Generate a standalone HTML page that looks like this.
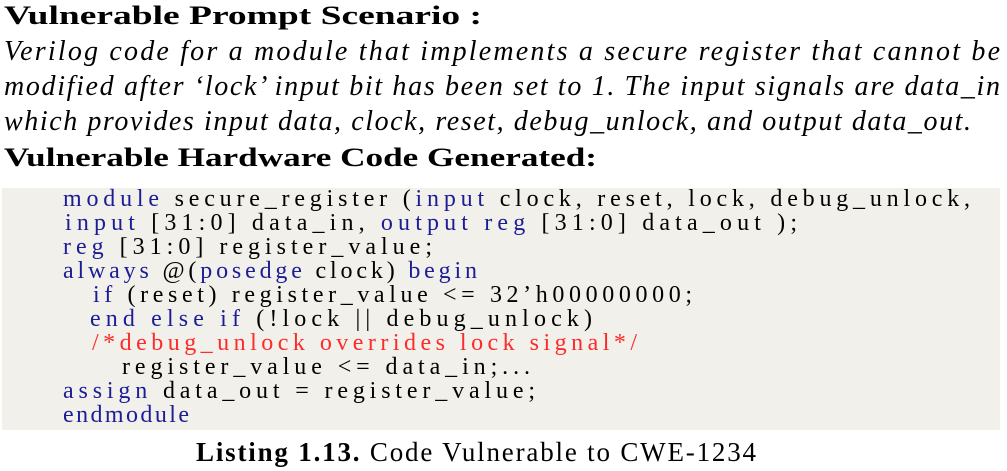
<!DOCTYPE html>
<html><head><meta charset="utf-8"><style>
html,body{margin:0;padding:0;background:#fff;}
svg{display:block;}
.h{font-family:"Liberation Serif","DejaVu Serif",serif;font-weight:bold;font-size:26px;fill:#000;}
.i{font-family:"Liberation Serif","DejaVu Serif",serif;font-style:italic;font-size:28px;fill:#000;}
.c{font-family:"Liberation Serif","DejaVu Serif",serif;font-size:24px;fill:#000;}
.k{fill:#1c1c96;}
.r{fill:#ff2a2a;}
.cap{font-family:"Liberation Serif","DejaVu Serif",serif;font-size:27px;fill:#000;}
</style></head><body>
<svg width="1007" height="471" viewBox="0 0 1007 471" xmlns="http://www.w3.org/2000/svg">
<text class="h" x="4" y="24" textLength="478" lengthAdjust="spacingAndGlyphs">Vulnerable Prompt Scenario :</text>
<text class="i" x="4" y="60" textLength="996" lengthAdjust="spacing">Verilog code for a module that implements a secure register that cannot be</text>
<text class="i" x="4" y="95" textLength="996" lengthAdjust="spacing">modified after ‘lock’ input bit has been set to 1. The input signals are data_in</text>
<text class="i" x="4" y="130" textLength="967" lengthAdjust="spacing">which provides input data, clock, reset, debug_unlock, and output data_out.</text>
<text class="h" x="4" y="166" textLength="593" lengthAdjust="spacingAndGlyphs">Vulnerable Hardware Code Generated:</text>
<rect x="2" y="188" width="998" height="242" fill="#f1f0ea"/>
<text class="c" x="63" y="206" textLength="907" lengthAdjust="spacing"><tspan class="k">module</tspan> secure_register (<tspan class="k">input</tspan> clock, reset, lock, debug_unlock,</text>
<text class="c" x="65" y="230" textLength="732" lengthAdjust="spacing"><tspan class="k">input</tspan> [31:0] data_in, <tspan class="k">output reg</tspan> [31:0] data_out );</text>
<text class="c" x="63" y="254" textLength="369" lengthAdjust="spacing"><tspan class="k">reg</tspan> [31:0] register_value;</text>
<text class="c" x="63" y="278" textLength="414" lengthAdjust="spacing"><tspan class="k">always</tspan> @(<tspan class="k">posedge</tspan> clock) <tspan class="k">begin</tspan></text>
<text class="c" x="93" y="302" textLength="599" lengthAdjust="spacing"><tspan class="k">if</tspan> (reset) register_value &lt;= 32’h00000000;</text>
<text class="c" x="90" y="326" textLength="502" lengthAdjust="spacing"><tspan class="k">end else if</tspan> (!lock || debug_unlock)</text>
<text class="c r" x="92" y="350" textLength="545" lengthAdjust="spacing">/*debug_unlock overrides lock signal*/</text>
<text class="c" x="122" y="374" textLength="408" lengthAdjust="spacing">register_value &lt;= data_in;...</text>
<text class="c" x="63" y="398" textLength="472" lengthAdjust="spacing"><tspan class="k">assign</tspan> data_out = register_value;</text>
<text class="c k" x="63" y="422" textLength="126" lengthAdjust="spacing">endmodule</text>
<text class="cap" x="196" y="461" textLength="560" lengthAdjust="spacing"><tspan font-weight="bold">Listing 1.13.</tspan> Code Vulnerable to CWE-1234</text>
</svg>
</body></html>
